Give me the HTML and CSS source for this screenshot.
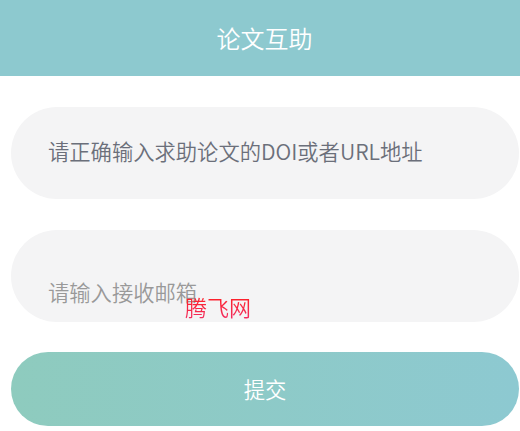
FILE: index.html
```html
<!DOCTYPE html>
<html lang="zh-CN">
<head>
<meta charset="utf-8">
<title>论文互助</title>
<link rel="stylesheet" href="styles.css">
</head>
<body>
<header class="topbar">论文互助</header>
<main class="form">
  <div class="field field-center">请正确输入求助论文的DOI或者URL地址</div>
  <div class="field field-bottom"><span class="placeholder">请输入接收邮箱</span></div>
  <button class="submit" type="button">提交</button>
</main>
<div class="watermark">腾飞网</div>
</body>
</html>
```

FILE: styles.css
```css
html, body {
  margin: 0;
  padding: 0;
  background: #ffffff;
}
body {
  font-family: "Noto Sans CJK SC", "Noto Sans", sans-serif;
  font-weight: 350;
  width: 520px;
  height: 431px;
  overflow: hidden;
  position: relative;
}
.topbar {
  height: 76px;
  background: #8dc9cf;
  color: #ffffff;
  font-size: 24px;
  display: flex;
  align-items: center;
  justify-content: center;
  padding-left: 9px;
  box-sizing: border-box;
  line-height: 1;
}
.form {
  padding: 31px 1px 0 11px;
  display: flex;
  flex-direction: column;
  gap: 31px;
}
.field {
  height: 92px;
  border-radius: 46px;
  background: #f4f4f5;
  box-sizing: border-box;
  padding-left: 37px;
  font-size: 21.3px;
  display: flex;
  line-height: 30px;
}
.field-center {
  align-items: center;
  color: #6b6f7a;
  padding-bottom: 4px;
}
.field-bottom {
  align-items: flex-end;
  padding-bottom: 15px;
}
.placeholder {
  color: #999999;
}
.submit {
  margin-top: -1px;
  height: 74px;
  border: none;
  border-radius: 37px;
  background: linear-gradient(90deg, #8ecbbe 0%, #8dc9d1 100%);
  color: #ffffff;
  font-family: inherit;
  font-weight: 350;
  font-size: 21.3px;
  padding: 0 0 2px 0;
  cursor: pointer;
}
.watermark {
  position: absolute;
  left: 185px;
  top: 294px;
  font-size: 22px;
  line-height: 30px;
  font-family: "Liberation Serif", "Noto Sans CJK SC", serif;
  font-weight: 350;
  background: linear-gradient(180deg, #ff1f1f 0%, #f0306e 100%);
  -webkit-background-clip: text;
  background-clip: text;
  color: transparent;
}
```
